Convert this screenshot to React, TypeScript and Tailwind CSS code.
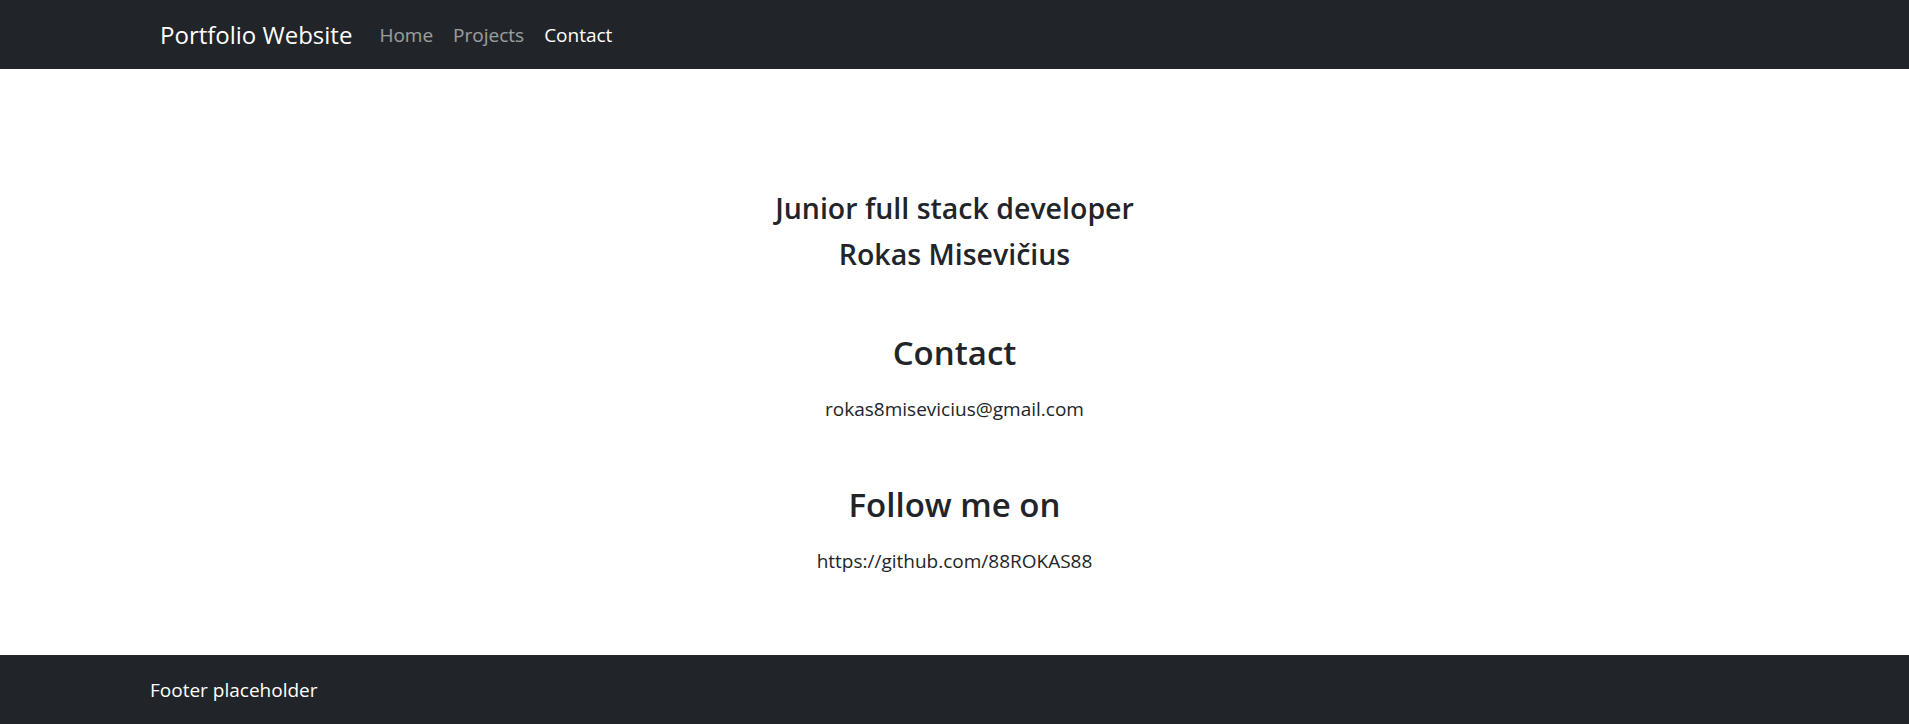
import React from 'react';

const links = [
  { label: 'Home', active: false },
  { label: 'Projects', active: false },
  { label: 'Contact', active: true },
];

export default function App() {
  return (
    <div className="min-h-screen flex flex-col bg-white text-[#212529] font-['Open_Sans',sans-serif]">
      <nav className="h-[69px] bg-[#212529] flex items-center">
        <div className="flex items-center pl-[160px]">
          <a href="#" className="text-white text-[24px] leading-[34px] mr-[17px]">
            Portfolio Website
          </a>
          <ul className="flex items-center">
            {links.map((link) => (
              <li key={link.label}>
                <a
                  href="#"
                  className={`block px-[10px] text-[19px] leading-[30px] ${
                    link.active ? 'text-white' : 'text-white/55'
                  }`}
                >
                  {link.label}
                </a>
              </li>
            ))}
          </ul>
        </div>
      </nav>

      <main className="flex-1 flex flex-col items-center text-center pt-[116px]">
        <h3 className="text-[28.5px] leading-[46px] font-semibold">
          Junior full stack developer
          <br />
          Rokas Misevičius
        </h3>
        <h2 className="mt-[52px] text-[33px] leading-[48px] font-semibold">Contact</h2>
        <p className="mt-[17px] text-[19px] leading-[30px]">rokas8misevicius@gmail.com</p>
        <h2 className="mt-[57px] text-[33px] leading-[48px] font-semibold">Follow me on</h2>
        <p className="mt-[17px] text-[19px] leading-[30px]">https://github.com/88ROKAS88</p>
      </main>

      <footer className="h-[69px] bg-[#212529] flex items-center pl-[150px]">
        <span className="text-white text-[19px] leading-[30px]">Footer placeholder</span>
      </footer>
    </div>
  );
}
